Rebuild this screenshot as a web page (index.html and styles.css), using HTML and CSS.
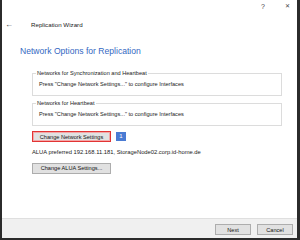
FILE: index.html
```html
<!doctype html>
<html lang="en">
<head>
<meta charset="UTF-8">
<title>Replication Wizard</title>
<link rel="stylesheet" href="styles.css">
</head>
<body>
	<div class="window">
		<div class="caption">
			<span class="cap_btn">?</span>
			<span class="cap_btn close">&#x2715;</span>
		</div>
		<div class="nav">
			<span class="back">&#x2190;</span>
			<span class="title">Replication Wizard</span>
		</div>
		<div class="page">
			<h1>Network Options for Replication</h1>
			<div class="options">
				<fieldset class="group">
					<legend>Networks for Synchronization and Heartbeat</legend>
					<p>Press "Change Network Settings..." to configure Interfaces</p>
				</fieldset>
				<fieldset class="group second">
					<legend>Networks for Heartbeat</legend>
					<p>Press "Change Network Settings..." to configure Interfaces</p>
				</fieldset>
				<div class="row">
					<button class="btn focus">Change Network Settings</button>
					<span class="badge">1</span>
				</div>
				<p class="alua">ALUA preferred 192.168.11.181, StorageNode02.corp.id-home.de</p>
				<button class="btn alua_btn">Change ALUA Settings...</button>
			</div>
		</div>
		<div class="footer">
			<button class="btn foot_btn">Next</button>
			<button class="btn foot_btn">Cancel</button>
		</div>
	</div>
</body>
</html>
```

FILE: styles.css
```css
body{
	margin:0;
	font-family:"Liberation Sans", Arial, sans-serif;
	color:#1a1a1a;
}
.window{
	width:300px;
	height:240px;
	box-sizing:border-box;
	border-left:2px solid #2b2b2b;
	border-right:3px solid #2b2b2b;
	border-bottom:2px solid #2b2b2b;
	background:#fff;
	display:flex;
	flex-direction:column;
}
.caption{
	height:13px;
	display:flex;
	justify-content:flex-end;
	padding-right:6px;
}
.cap_btn{
	font-size:7px;
	line-height:13px;
	color:#444;
	width:8px;
	text-align:center;
	margin-left:16px;
}
.close{
	font-size:6px;
}
.nav{
	height:22px;
	display:flex;
	align-items:center;
	padding-left:3px;
}
.back{
	font-size:8px;
	width:8px;
	color:#333;
}
.title{
	font-size:6.2px;
	margin-left:18px;
	color:#222;
}
.page{
	flex:1;
	padding-left:18px;
}
h1{
	margin:11px 0 0 0;
	font-size:8.6px;
	line-height:10px;
	font-weight:normal;
	color:#3468c2;
}
.options{
	margin:13px 0 0 12px;
	width:250px;
}
.group{
	margin:0;
	padding:3px 0 7px 6px;
	border:1px solid #dcdcdc;
	min-width:0;
}
.group legend{
	font-size:5.6px;
	line-height:8px;
	padding:0 1px;
	margin-left:-3px;
}
.group p{
	margin:0;
	font-size:5.6px;
	line-height:8px;
}
.second{
	margin-top:3px;
}
.row{
	display:flex;
	align-items:center;
	margin-top:5px;
}
.btn{
	font-family:"Liberation Sans", Arial, sans-serif;
	font-size:5.6px;
	height:11px;
	padding:0;
	background:#e1e1e1;
	border:1px solid #adadad;
	color:#111;
}
.focus{
	width:79px;
	border-color:#e23434;
	box-shadow:inset 0 0 0 1px #f3a8a8;
}
.alua_btn{
	width:79px;
	margin-top:6px;
}
.badge{
	margin-left:5px;
	width:10px;
	height:9px;
	background:#4a7bd3;
	color:#fff;
	font-size:6px;
	line-height:9px;
	text-align:center;
}
.alua{
	margin:6px 0 0 0;
	font-size:5.8px;
	line-height:8px;
}
.footer{
	height:20px;
	background:#f0f0f0;
	border-top:1px solid #dfdfdf;
	display:flex;
	justify-content:flex-end;
	align-items:flex-start;
	padding:5px 4px 0 0;
	box-sizing:border-box;
}
.foot_btn{
	width:36px;
	margin-left:6px;
}
```
